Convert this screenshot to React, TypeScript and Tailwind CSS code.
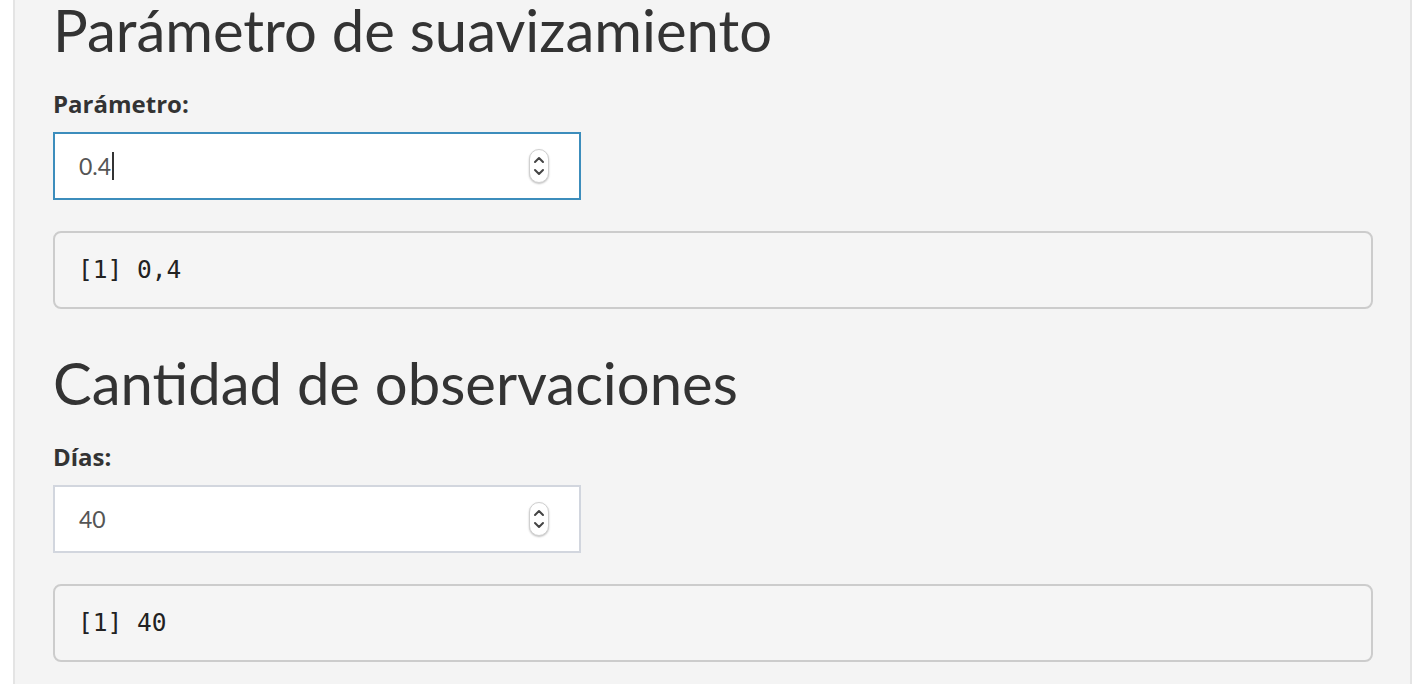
import React from 'react'

const sans = { fontFamily: 'Lato, "Open Sans", sans-serif' }
const labelFont = { fontFamily: '"Open Sans", Lato, sans-serif' }

const Spinner: React.FC = () => (
  <div className="absolute right-[30px] top-1/2 -translate-y-1/2 w-[20px] h-[34px] rounded-full bg-white border border-[#d0d0d0] shadow-[0_1px_2px_rgba(0,0,0,0.25)] flex flex-col items-center justify-center">
    <svg width="12" height="26" viewBox="0 0 12 26" fill="none" stroke="#444" strokeWidth="2" strokeLinecap="round" strokeLinejoin="round">
      <path d="M2 9 L6 5 L10 9" />
      <path d="M2 17 L6 21 L10 17" />
    </svg>
  </div>
)

const NumberInput: React.FC<{ value: string; focused?: boolean }> = ({ value, focused }) => (
  <div
    className={`relative w-[528px] h-[68px] bg-white border-2 flex items-center pl-[24px] text-[23px] text-[#555] ${
      focused ? 'border-[#3c8dbc]' : 'border-[#d2d6de]'
    }`}
    style={sans}
  >
    <span>{value}</span>
    {focused && <span className="inline-block w-[2px] h-[28px] bg-[#333] ml-[1px]" />}
    <Spinner />
  </div>
)

const Output: React.FC<{ text: string }> = ({ text }) => (
  <div className="w-[1320px] h-[78px] border-2 border-[#cccccc] rounded-[8px] bg-[#f5f5f5] flex items-center pl-[23px]">
    <pre className="text-[24.5px] text-[#222]" style={{ fontFamily: '"DejaVu Sans Mono", "Liberation Mono", monospace' }}>
      {text}
    </pre>
  </div>
)

const Section: React.FC<{ title: string; label: string; value: string; out: string; focused?: boolean }> = ({
  title,
  label,
  value,
  out,
  focused,
}) => (
  <div>
    <h2 className="text-[58px] leading-[60px] text-[#333]" style={sans}>
      {title}
    </h2>
    <div className="mt-[30px] text-[24px] leading-[28px] font-bold text-[#333]" style={labelFont}>
      {label}
    </div>
    <div className="mt-[14px]">
      <NumberInput value={value} focused={focused} />
    </div>
    <div className="mt-[31px]">
      <Output text={out} />
    </div>
  </div>
)

export default function App() {
  return (
    <div className="w-[1423px] h-[684px] bg-white overflow-hidden">
      <div className="ml-[13px] w-[1399px] h-full bg-[#f4f4f4] border-l-2 border-r-2 border-[#e4e4e4] pl-[38px]">
        <Section title="Parámetro de suavizamiento" label="Parámetro:" value="0.4" out="[1] 0,4" focused />
        <div className="mt-[44px]">
          <Section title="Cantidad de observaciones" label="Días:" value="40" out="[1] 40" />
        </div>
      </div>
    </div>
  )
}
